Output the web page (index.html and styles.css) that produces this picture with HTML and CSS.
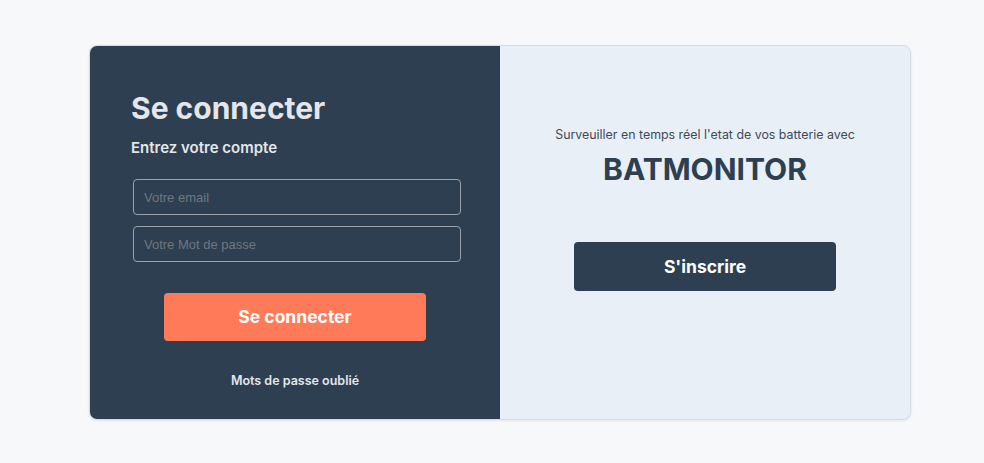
FILE: index.html
```html
<!DOCTYPE html>
<html lang="fr">
<head>
<meta charset="utf-8">
<title>BatMonitor - Se connecter</title>
<link rel="stylesheet" href="styles.css">
</head>
<body>
<main class="page">
  <section class="card">
    <div class="login">
      <h1 class="login-title">Se connecter</h1>
      <p class="login-sub">Entrez votre compte</p>
      <form class="login-form">
        <input class="field" type="email" placeholder="Votre email">
        <input class="field" type="password" placeholder="Votre Mot de passe">
        <button class="btn btn-primary" type="button">Se connecter</button>
      </form>
      <a class="forgot" href="#">Mots de passe oublié</a>
    </div>
    <div class="promo">
      <p class="promo-text">Surveuiller en temps réel l'etat de vos batterie avec</p>
      <h2 class="promo-brand">BATMONITOR</h2>
      <button class="btn btn-dark" type="button">S'inscrire</button>
    </div>
  </section>
</main>
</body>
</html>
```

FILE: styles.css
```css
* { box-sizing: border-box; }
html, body { margin: 0; padding: 0; }
body {
  background: #f7f8fa;
  font-family: Inter, "Noto Sans", sans-serif;
  width: 984px;
  height: 463px;
}
.page {
  padding: 45px 0 0 89px;
  display: flex;
}
.card {
  width: 822px;
  height: 375px;
  display: grid;
  grid-template-columns: 410px 1fr;
  border-radius: 8px;
  border: 1px solid #d4dbe3;
  box-shadow: 0 1px 3px rgba(0,0,0,0.08);
  overflow: hidden;
  background: #e8eff7;
}
.login {
  background: #2d3f51;
  padding: 44px 0 0 41px;
  display: flex;
  flex-direction: column;
}
.login-title {
  margin: 0;
  font-size: 30px;
  line-height: 36px;
  font-weight: 700;
  color: #e4e6e9;
}
.login-sub {
  margin: 12px 0 0;
  font-size: 15px;
  line-height: 20px;
  font-weight: 600;
  color: #e4e6e9;
}
.login-form {
  margin-top: 21px;
  width: 330px;
  display: flex;
  flex-direction: column;
  gap: 11px;
  align-items: center;
}
.field {
  width: 328px;
  height: 36px;
  margin-left: 2px;
  background: transparent;
  border: 1px solid #9aa1a9;
  border-radius: 4px;
  padding: 0 10px;
  font-family: "Liberation Sans", Arial, sans-serif;
  font-size: 13px;
  color: #e4e6e9;
  outline: none;
}
.field::placeholder { color: #6f7780; }
.btn {
  width: 262px;
  height: 48px;
  border: none;
  border-radius: 4px;
  font-family: Inter, "Noto Sans", sans-serif;
  font-size: 17.5px;
  font-weight: 700;
  color: #ffffff;
  cursor: pointer;
}
.btn-primary {
  margin-top: 20px;
  margin-left: -2px;
  padding-bottom: 2px;
  background: #ff7a59;
}
.forgot {
  margin-top: 32px;
  width: 328px;
  text-align: center;
  font-size: 12.5px;
  line-height: 16px;
  font-weight: 600;
  color: #e4e6e9;
  text-decoration: none;
}
.promo {
  display: flex;
  flex-direction: column;
  align-items: center;
  padding-top: 81px;
}
.promo-text {
  margin: 0;
  font-size: 12.4px;
  line-height: 16px;
  color: #3d4a58;
}
.promo-brand {
  margin: 8px 0 0;
  font-size: 30px;
  line-height: 36px;
  font-weight: 700;
  color: #2d3f51;
}
.btn-dark {
  margin-top: 55px;
  height: 49px;
  padding-bottom: 2px;
  background: #2d3f51;
}
```
